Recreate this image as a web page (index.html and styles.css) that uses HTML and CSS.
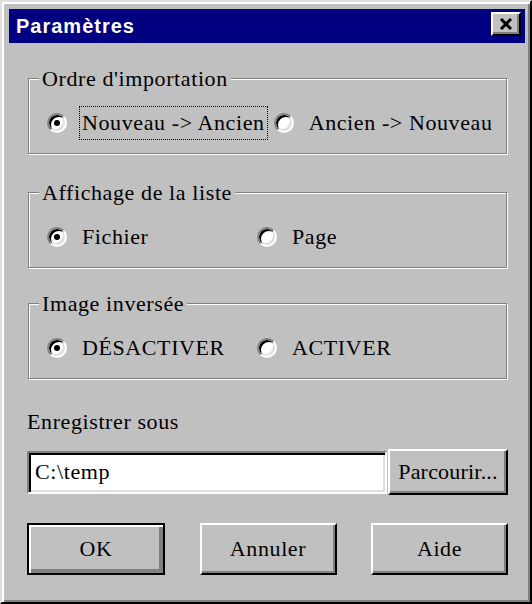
FILE: index.html
```html
<!DOCTYPE html>
<html lang="fr">
<head>
<meta charset="utf-8">
<title>Paramètres</title>
<link rel="stylesheet" href="styles.css">
</head>
<body>
<div class="window">
  <div class="titlebar">
    <span class="title">Paramètres</span>
    <span class="close-btn">
      <svg width="14" height="12" viewBox="0 0 14 12"><path d="M2 1 L12 11 M12 1 L2 11" stroke="#000" stroke-width="3" fill="none"/></svg>
    </span>
  </div>
  <div class="content">
    <div class="group g1">
      <span class="legend">Ordre d'importation</span>
      <div class="row">
        <label class="option first"><span class="radio checked"></span><span class="text focus">Nouveau -&gt; Ancien</span></label>
        <label class="option"><span class="radio"></span><span class="text">Ancien -&gt; Nouveau</span></label>
      </div>
    </div>
    <div class="group g2">
      <span class="legend">Affichage de la liste</span>
      <div class="row">
        <label class="option first"><span class="radio checked"></span><span class="text">Fichier</span></label>
        <label class="option"><span class="radio"></span><span class="text">Page</span></label>
      </div>
    </div>
    <div class="group g3">
      <span class="legend">Image inversée</span>
      <div class="row">
        <label class="option first"><span class="radio checked"></span><span class="text">DÉSACTIVER</span></label>
        <label class="option"><span class="radio"></span><span class="text">ACTIVER</span></label>
      </div>
    </div>
    <div class="save-label">Enregistrer sous</div>
    <div class="path-row">
      <div class="input">C:\temp</div>
      <div class="btn browse">Parcourir...</div>
    </div>
    <div class="actions">
      <div class="btn big default">OK</div>
      <div class="btn big">Annuler</div>
      <div class="btn big">Aide</div>
    </div>
  </div>
</div>
</body>
</html>
```
FILE: styles.css
```css
html, body {
  margin: 0;
  padding: 0;
  background: #c0c0c0;
}

.window {
  box-sizing: border-box;
  width: 532px;
  height: 604px;
  background: #c0c0c0;
  border: 2px solid;
  border-color: #dfdfdf #000 #000 #dfdfdf;
  box-shadow: inset 2px 2px #fff, inset -2px -2px #808080;
  padding: 7px 5px 5px 7px;
  display: flex;
  flex-direction: column;
  font-family: "Liberation Serif", "Times New Roman", serif;
  font-size: 22px;
  letter-spacing: 0.6px;
  color: #000;
}

.titlebar {
  height: 34px;
  flex: none;
  background: #000080;
  display: flex;
  align-items: center;
  justify-content: space-between;
  padding: 0 4px 0 7px;
}

.title {
  font-family: "Liberation Sans", Arial, sans-serif;
  font-weight: bold;
  font-size: 20px;
  letter-spacing: 1px;
  color: #fff;
}

.close-btn {
  box-sizing: border-box;
  width: 30px;
  height: 24px;
  align-self: flex-start;
  margin-top: 3px;
  background: #c0c0c0;
  border: 2px solid;
  border-color: #fff #000 #000 #fff;
  box-shadow: inset -2px -2px #808080;
  display: flex;
  align-items: center;
  justify-content: center;
}

.close-btn svg {
  display: block;
  margin: 0 1px 1px 0;
}

.content {
  padding: 35px 17px 0 18px;
  display: flex;
  flex-direction: column;
}

.group {
  position: relative;
  box-sizing: border-box;
  height: 76px;
  margin: 0 1px;
  border: 1px solid #808080;
  box-shadow: inset 1px 1px #fff, 1px 1px #fff;
  padding: 27px 10px 0 18px;
}

.g2 { margin-top: 38px; }
.g3 { margin-top: 35px; }

.legend {
  position: absolute;
  top: -12px;
  left: 10px;
  padding: 0 3px;
  background: #c0c0c0;
  line-height: 24px;
  white-space: nowrap;
}

.row {
  display: flex;
  align-items: center;
  gap: 6px;
  height: 34px;
}

.option {
  display: flex;
  align-items: center;
  gap: 12px;
  white-space: nowrap;
}

.option.first {
  min-width: 204px;
}

.radio {
  box-sizing: border-box;
  width: 20px;
  height: 20px;
  flex: none;
  border-radius: 50%;
  border: 2px solid;
  border-color: #808080 #fff #fff #808080;
  background: #fff;
  box-shadow: inset 2px 2px #000, inset -2px -2px #dfdfdf;
  display: flex;
  align-items: center;
  justify-content: center;
}

.radio.checked::after {
  content: "";
  width: 6px;
  height: 6px;
  border-radius: 50%;
  background: #000;
}

.text {
  line-height: 24px;
  padding: 4px 2px;
  border: 1px dotted transparent;
}

.text.focus {
  border-color: #000;
}

.save-label {
  margin-top: 31px;
  line-height: 24px;
}

.path-row {
  margin-top: 15px;
  display: flex;
  align-items: center;
  gap: 1px;
}

.input {
  box-sizing: border-box;
  flex: 1;
  height: 43px;
  background: #fff;
  border: 2px solid;
  border-color: #808080 #fff #fff #808080;
  box-shadow: inset 2px 2px #000, inset -2px -2px #dfdfdf;
  padding: 0 6px;
  display: flex;
  align-items: center;
  line-height: 24px;
}

.btn {
  box-sizing: border-box;
  background: #c0c0c0;
  border: 2px solid;
  border-color: #fff #000 #000 #fff;
  box-shadow: inset -2px -2px #808080;
  display: flex;
  align-items: center;
  justify-content: center;
  line-height: 24px;
  white-space: nowrap;
}

.browse {
  width: 120px;
  height: 46px;
  letter-spacing: 0.2px;
}

.actions {
  margin-top: 28px;
  display: flex;
  justify-content: space-between;
}

.big {
  width: 137px;
  height: 52px;
}

.big.default {
  width: 138px;
  border: 2px solid #000;
  box-shadow: inset 2px 2px #fff, inset -2px -2px #808080, inset -4px -4px #808080;
}
```
